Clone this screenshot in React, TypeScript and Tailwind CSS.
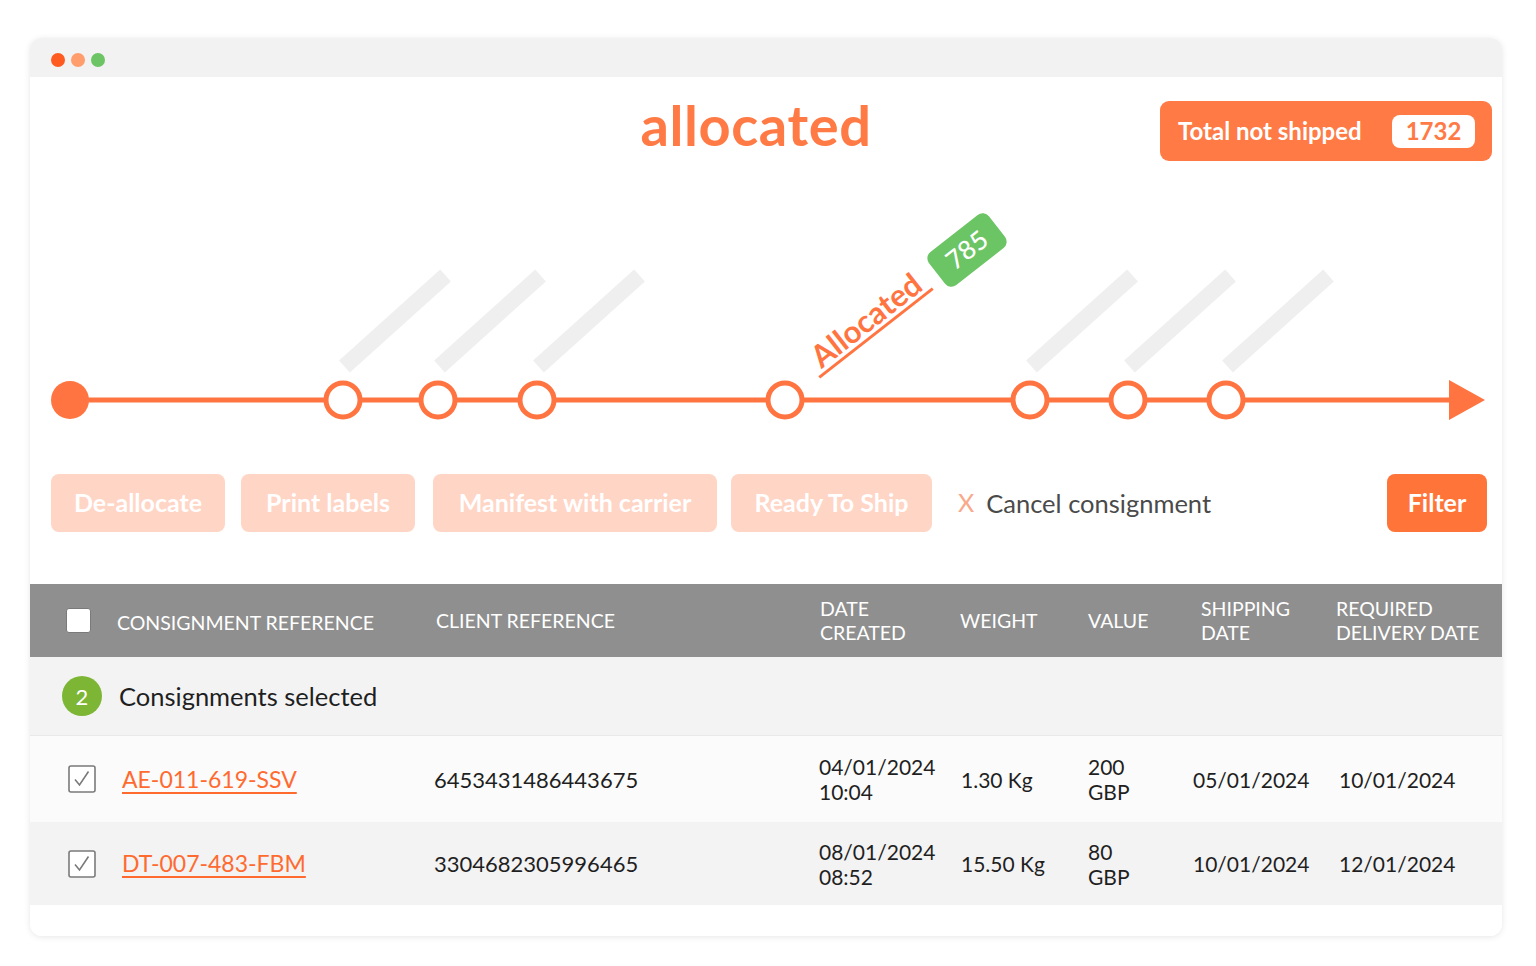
import React from "react";

const ORANGE = "#ff7440";

function Timeline() {
  const circles = [313, 408, 507, 755, 1000, 1098, 1196];
  const bars = [313, 408, 507, 1000, 1098, 1196];
  return (
    <svg width="1472" height="300" viewBox="0 0 1472 300" className="block">
      {bars.map((x) => (
        <rect
          key={x}
          x={-68}
          y={-8}
          width={136}
          height={16}
          fill="#efefef"
          transform={`translate(${x + 52},160) rotate(-42)`}
        />
      ))}
      <line x1={40} y1={239} x2={1425} y2={239} stroke={ORANGE} strokeWidth={5} />
      <polygon points="1419,219 1455,239 1419,259" fill={ORANGE} />
      <circle cx={40} cy={239} r={19} fill={ORANGE} />
      {circles.map((x) => (
        <circle key={x} cx={x} cy={239} r={17} fill="#fff" stroke={ORANGE} strokeWidth={5} />
      ))}
      <g transform="translate(846,172) rotate(-38)">
        <text
          x={0}
          y={-5}
          textAnchor="middle"
          fill={ORANGE}
          fontSize={31}
          fontWeight={700}
          fontFamily="Lato, sans-serif"
        >
          Allocated
        </text>
        <line x1={-72} y1={0} x2={72} y2={0} stroke={ORANGE} strokeWidth={3} />
      </g>
      <g transform="translate(937,89) rotate(-38)">
        <rect x={-38} y={-21} width={76} height={42} rx={8} fill="#6cc564" />
        <text
          x={0}
          y={9}
          textAnchor="middle"
          fill="#fff"
          fontSize={26}
          fontWeight={500}
          fontFamily="Lato, sans-serif"
        >
          785
        </text>
      </g>
    </svg>
  );
}

function CheckedBox() {
  return (
    <svg width="28" height="28" viewBox="0 0 28 28">
      <rect x="1" y="1" width="26" height="26" rx="2" fill="#fff" stroke="#7a7a7a" strokeWidth="1.6" />
      <path d="M7 14.5 L11.5 20 L20.5 6.5" fill="none" stroke="#7a7a7a" strokeWidth="1.6" />
    </svg>
  );
}

const grid = "grid grid-cols-[51px_319px_384px_140px_128px_105px_143px_1fr] items-center pl-[36px]";

const rows = [
  {
    ref: "AE-011-619-SSV",
    client: "6453431486443675",
    date: "04/01/2024",
    time: "10:04",
    weight: "1.30 Kg",
    value: "200",
    ship: "05/01/2024",
    req: "10/01/2024",
    bg: "bg-[#fbfbfb]",
    h: "h-[86px]",
  },
  {
    ref: "DT-007-483-FBM",
    client: "3304682305996465",
    date: "08/01/2024",
    time: "08:52",
    weight: "15.50 Kg",
    value: "80",
    ship: "10/01/2024",
    req: "12/01/2024",
    bg: "bg-[#f3f3f4]",
    h: "h-[83px]",
  },
];

export default function App() {
  return (
    <div className="min-h-[966px] bg-white pt-[38px] pl-[30px] font-['Lato',sans-serif]">
      <div className="w-[1472px] rounded-[12px] bg-white shadow-[0_1px_6px_rgba(0,0,0,0.10)] overflow-hidden">
        {/* window bar */}
        <div className="h-[39px] bg-[#f2f2f2] flex items-start gap-[6px] pl-[21px] pt-[15px]">
          <span className="w-[14px] h-[14px] rounded-full bg-[#ff5a1f]" />
          <span className="w-[14px] h-[14px] rounded-full bg-[#ff9d6c]" />
          <span className="w-[14px] h-[14px] rounded-full bg-[#6cc464]" />
        </div>

        {/* header */}
        <div className="grid grid-cols-[1fr_auto_1fr] items-center pt-[24px] pr-[10px] h-[84px]">
          <div />
          <div className="text-[56px] leading-none font-bold text-[#ff7a45] tracking-[0.6px] pr-[10px] -mt-[12px]">
            allocated
          </div>
          <div className="flex justify-end">
            <div className="h-[60px] w-[332px] rounded-[9px] bg-[#ff7a45] flex items-center justify-between pl-[18px] pr-[17px]">
              <span className="text-white text-[24px] font-bold">Total not shipped</span>
              <span className="w-[83px] h-[33px] rounded-[8px] bg-white flex items-center justify-center text-[#ff7a45] text-[24px] font-bold">
                1732
              </span>
            </div>
          </div>
        </div>

        <Timeline />

        {/* actions */}
        <div className="flex items-center mt-[13px] pl-[21px] pr-[15px] h-[58px]">
          <button className="w-[174px] h-[58px] rounded-[8px] bg-[#ffd5c6] text-white text-[25px] font-bold">
            De-allocate
          </button>
          <button className="ml-[16px] w-[174px] h-[58px] rounded-[8px] bg-[#ffd5c6] text-white text-[25px] font-bold">
            Print labels
          </button>
          <button className="ml-[18px] w-[284px] h-[58px] rounded-[8px] bg-[#ffd5c6] text-white text-[25px] font-bold">
            Manifest with carrier
          </button>
          <button className="ml-[14px] w-[201px] h-[58px] rounded-[8px] bg-[#ffd5c6] text-white text-[25px] font-bold">
            Ready To Ship
          </button>
          <div className="ml-[26px] flex items-center gap-[12px]">
            <span className="text-[#f9a98a] text-[25px]">X</span>
            <span className="text-[#4a4a4a] text-[25.5px]">Cancel consignment</span>
          </div>
          <button className="ml-auto w-[100px] h-[58px] rounded-[8px] bg-[#ff7439] text-white text-[25px] font-bold">
            Filter
          </button>
        </div>

        {/* table */}
        <div className="mt-[52px]">
          <div className={`${grid} h-[73px] bg-[#8f8f8f] text-white text-[19.5px] leading-[24px] uppercase`}>
            <div>
              <span className="block w-[25px] h-[25px] rounded-[3px] bg-white border border-[#7a7a7a]" />
            </div>
            <div className="pt-[4px]">Consignment reference</div>
            <div>Client reference</div>
            <div>
              Date
              <br />
              Created
            </div>
            <div>Weight</div>
            <div>Value</div>
            <div className="pl-[8px]">
              Shipping
              <br />
              Date
            </div>
            <div>
              Required
              <br />
              Delivery date
            </div>
          </div>

          <div className="h-[79px] bg-[#f3f3f4] flex items-center pl-[32px] gap-[17px] border-b border-[#e9e9e9]">
            <span className="w-[40px] h-[40px] rounded-full bg-[#7db634] text-white text-[22px] flex items-center justify-center">
              2
            </span>
            <span className="text-[#1f1f1f] text-[25.5px]">Consignments selected</span>
          </div>

          {rows.map((r) => (
            <div key={r.ref} className={`${grid} ${r.h} ${r.bg} text-[#1f1f1f] text-[21px] leading-[25px]`}>
              <div className="pl-[2px]">
                <CheckedBox />
              </div>
              <div className="pl-[5px] text-[23px]">
                <span className="text-[#ff6a2f] underline underline-offset-[4px] decoration-[1.5px]">{r.ref}</span>
              </div>
              <div className="-ml-[2px] text-[22px]">{r.client}</div>
              <div className="-ml-[1px]">
                {r.date}
                <br />
                {r.time}
              </div>
              <div className="pl-[1px]">{r.weight}</div>
              <div>
                {r.value}
                <br />
                GBP
              </div>
              <div>{r.ship}</div>
              <div className="pl-[3px]">{r.req}</div>
            </div>
          ))}
          <div className="h-[31px] bg-white" />
        </div>
      </div>
    </div>
  );
}
